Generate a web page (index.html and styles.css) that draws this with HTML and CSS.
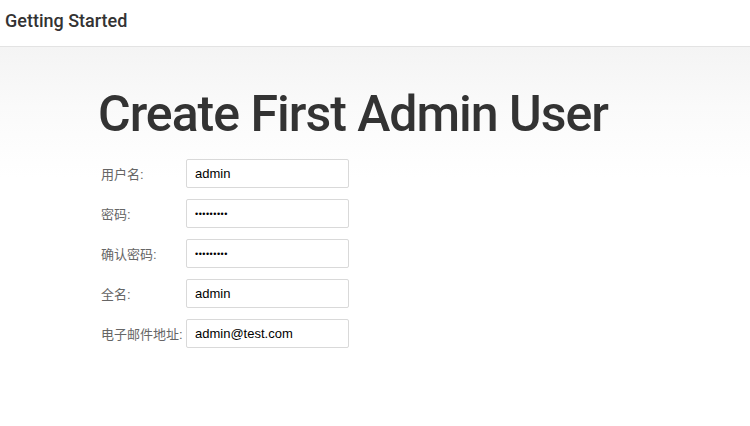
FILE: index.html
```html
<!DOCTYPE html>
<html lang="zh">
<head>
  <meta charset="UTF-8" />
  <meta name="viewport" content="width=device-width, initial-scale=1.0" />
  <title>Getting Started</title>
  <link rel="stylesheet" href="styles.css">
</head>
<body>
  <div class="topbar">Getting Started</div>
  <div class="jumbo">
    <h1>Create First Admin User</h1>
    <form class="admin-form">
      <label for="username">用户名:</label>
      <input type="text" id="username" value="admin" />
      <label for="password1">密码:</label>
      <input type="password" id="password1" value="password1" />
      <label for="password2">确认密码:</label>
      <input type="password" id="password2" value="password1" />
      <label for="fullname">全名:</label>
      <input type="text" id="fullname" value="admin" />
      <label for="email">电子邮件地址:</label>
      <input type="text" id="email" value="admin@test.com" />
    </form>
  </div>
</body>
</html>
```

FILE: styles.css
```css
html, body {
  margin: 0;
  padding: 0;
  background: #fff;
}
body {
  font-family: Roboto, "Noto Sans CJK SC", sans-serif;
  color: #333;
}
.topbar {
  height: 47px;
  line-height: 42px;
  padding-left: 5px;
  font-size: 18px;
  font-weight: 500;
  border-bottom: 1px solid #e3e3e3;
  box-sizing: border-box;
}
.jumbo {
  padding: 32px 0 40px 98px;
  background: linear-gradient(to bottom, #f4f4f4 0px, #fafafa 60px, #fff 130px);
}
h1 {
  margin: 0 0 10px 0;
  font-size: 50px;
  font-weight: 500;
  letter-spacing: -1px;
  line-height: 70px;
  color: #333;
}
.admin-form {
  display: grid;
  grid-template-columns: 81px 163px;
  column-gap: 4px;
  row-gap: 11px;
  margin-left: 3px;
  align-items: center;
}
.admin-form label {
  font-family: "Liberation Sans", "Noto Sans CJK SC", sans-serif;
  font-size: 13px;
  color: #666;
  white-space: nowrap;
  align-self: start;
  padding-top: 5px;
}
.admin-form input {
  height: 29px;
  box-sizing: border-box;
  border: 1px solid #d9d9d9;
  border-radius: 2px;
  padding: 0 8px;
  font-family: "Liberation Sans", sans-serif;
  font-size: 13px;
  color: #000;
  background: #fff;
}
.admin-form input[type="password"] {
  font-size: 9px;
  letter-spacing: 0.5px;
}
```
